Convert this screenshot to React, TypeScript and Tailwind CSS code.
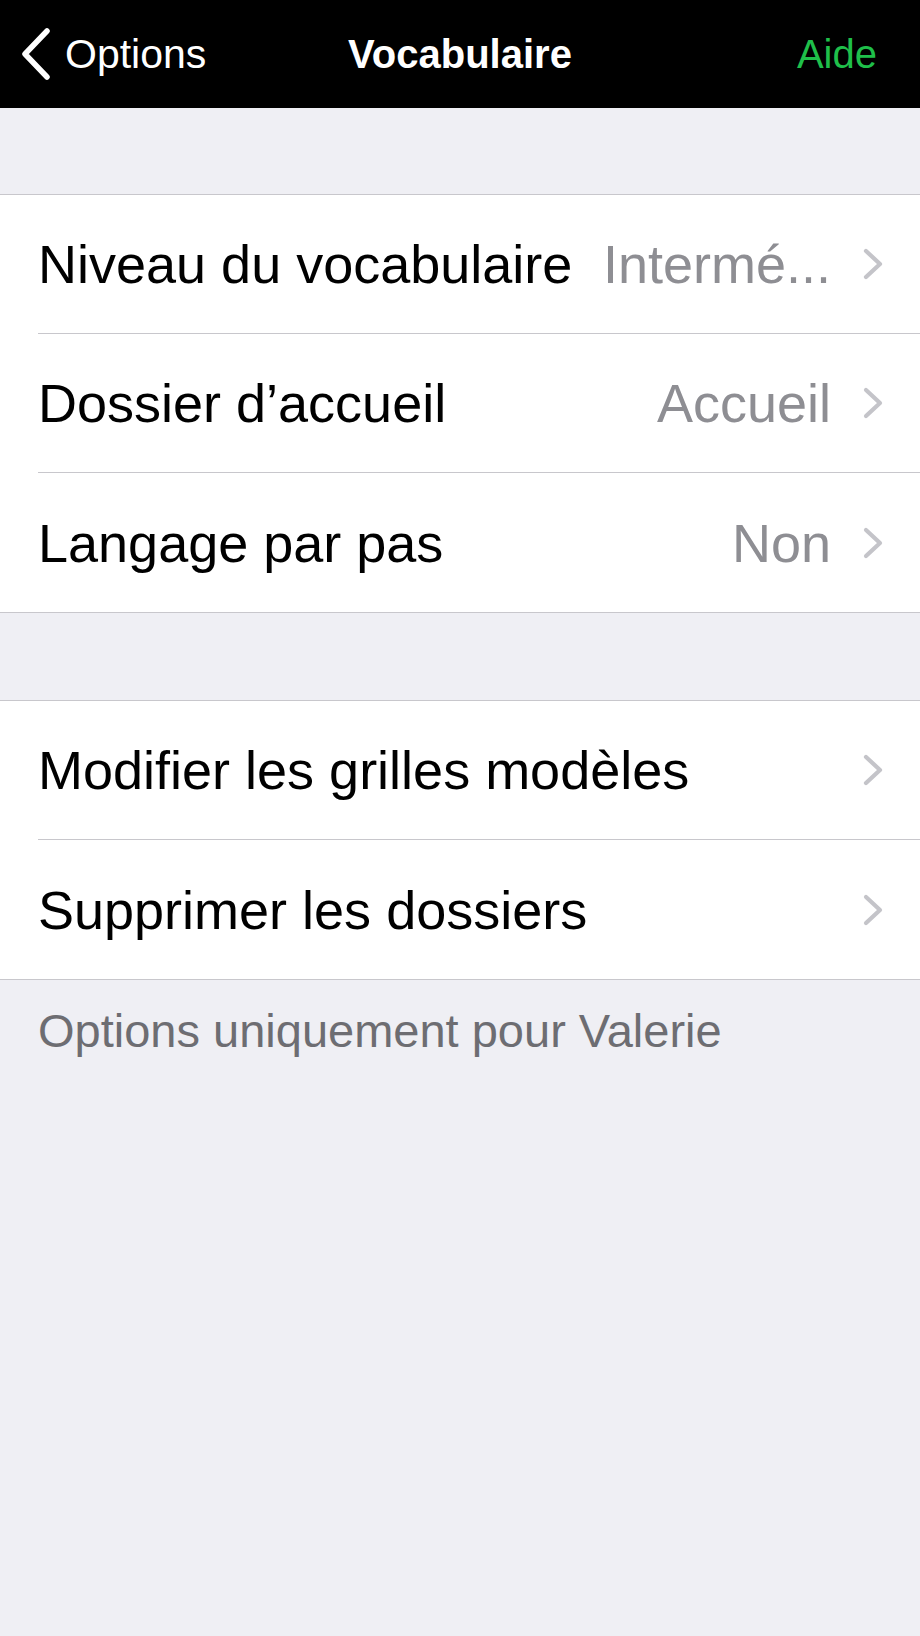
import React from "react";

function RowChevron() {
  return (
    <svg width="20" height="32" viewBox="0 0 20 32" fill="none" className="shrink-0">
      <polyline
        points="3,3 17,16 3,29"
        stroke="#c4c4c9"
        strokeWidth="4.2"
        strokeLinecap="round"
        strokeLinejoin="round"
      />
    </svg>
  );
}

function BackChevron() {
  return (
    <svg width="30" height="52" viewBox="0 0 30 52" fill="none" className="shrink-0">
      <polyline
        points="26,3 4,26 26,49"
        stroke="#ffffff"
        strokeWidth="5.5"
        strokeLinecap="round"
        strokeLinejoin="round"
      />
    </svg>
  );
}

type RowProps = { label: string; value?: string; last?: boolean };

function Row({ label, value, last }: RowProps) {
  return (
    <div className="pl-[38px] bg-white">
      <div
        className={
          "h-[139px] box-border flex items-center pr-[37px] " +
          (last ? "" : "border-b border-[#c8c7cc]")
        }
      >
        <span className="shrink-0 text-[54px] leading-none text-black whitespace-nowrap">
          {label}
        </span>
        <span className="flex-1 min-w-0 ml-[30px] text-right text-[54px] leading-none text-[#8e8e93] whitespace-nowrap">
          {value ?? ""}
        </span>
        <span className="ml-[32px] flex items-center">
          <RowChevron />
        </span>
      </div>
    </div>
  );
}

export default function App() {
  return (
    <div
      className="min-h-screen w-full bg-[#efeff4]"
      style={{ fontFamily: '"Liberation Sans", Arial, sans-serif' }}
    >
      {/* Navigation bar */}
      <div className="relative h-[108px] bg-black flex items-center justify-between pl-[21px] pr-[43px]">
        <div className="flex items-center">
          <BackChevron />
          <span className="ml-[14px] text-[41px] leading-none text-white">Options</span>
        </div>
        <div className="absolute inset-0 flex items-center justify-center pointer-events-none">
          <span className="text-[40px] leading-none font-bold text-white">Vocabulaire</span>
        </div>
        <span className="text-[40px] leading-none text-[#1fbf4a]">Aide</span>
      </div>

      {/* Section 1 */}
      <div className="mt-[86px] border-t border-b border-[#c8c7cc] bg-white">
        <Row label="Niveau du vocabulaire" value="Intermé..." />
        <Row label="Dossier d’accueil" value="Accueil" />
        <Row label="Langage par pas" value="Non" last />
      </div>

      {/* Section 2 */}
      <div className="mt-[87px] border-t border-b border-[#c8c7cc] bg-white">
        <Row label="Modifier les grilles modèles" />
        <Row label="Supprimer les dossiers" last />
      </div>

      <div className="pt-[23px] pl-[38px] text-[47px] leading-[56px] text-[#6d6d72]">
        Options uniquement pour Valerie
      </div>
    </div>
  );
}
